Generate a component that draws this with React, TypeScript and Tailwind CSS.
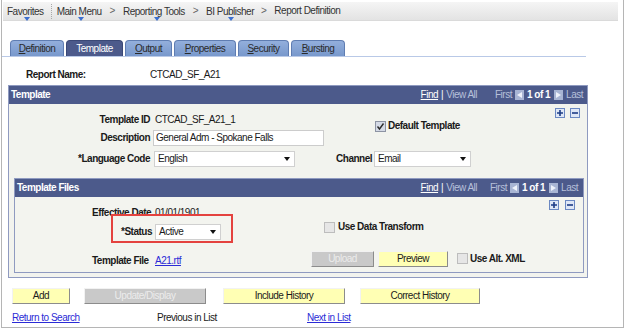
import React from 'react';

function Caret({ left }: { left: string }) {
  return (
    <svg className={`absolute top-[15px] ${left}`} width="6" height="4" viewBox="0 0 6 4">
      <path d="M0 0 L6 0 L3 4 Z" fill="#3b6fcf" />
    </svg>
  );
}

function Tab({ label, width, active }: { label: string; width: string; active?: boolean }) {
  return (
    <div
      className={`h-[16px] ${width} rounded-t-[4px] border border-b-0 flex items-center justify-center ${
        active
          ? 'bg-[#4c5a8b] border-[#3a4876] text-white'
          : 'bg-gradient-to-b from-[#93afdc] to-[#7898cc] border-[#5f7db2] text-[#2b2b2b]'
      }`}
    >
      {active ? (
        label
      ) : (
        <span>
          <span className="underline">{label[0]}</span>
          {label.slice(1)}
        </span>
      )}
    </div>
  );
}

function Check({ checked, disabled }: { checked?: boolean; disabled?: boolean }) {
  return (
    <span
      className={`w-[11px] h-[11px] border flex items-center justify-center ${
        disabled ? 'bg-[#e6e6e6] border-[#bdbdbd]' : 'bg-[#d5dae6] border-[#8d93a3]'
      }`}
    >
      {checked && (
        <svg width="9" height="9" viewBox="0 0 9 9">
          <path d="M1.5 4.5 L3.5 7 L7.5 1.5" stroke="#2c2c2c" strokeWidth="1.4" fill="none" />
        </svg>
      )}
    </span>
  );
}

function Select({ value, width }: { value: string; width: string }) {
  return (
    <div className={`h-[16px] ${width} bg-white border border-[#d0d0d0] flex items-center justify-between pl-[3px] pr-[4px]`}>
      <span>{value}</span>
      <svg width="6" height="4" viewBox="0 0 6 4">
        <path d="M0 0 L6 0 L3 4 Z" fill="#111" />
      </svg>
    </div>
  );
}

function PlusMinus({ gap }: { gap: string }) {
  return (
    <div className={`flex ${gap}`}>
      <span className="w-[10px] h-[10px] border border-[#6b88c2] bg-[#dfe7f6] flex items-center justify-center">
        <svg width="8" height="8" viewBox="0 0 8 8">
          <path d="M4 1 V7 M1 4 H7" stroke="#1d3c86" strokeWidth="1.6" />
        </svg>
      </span>
      <span className="w-[10px] h-[10px] border border-[#6b88c2] bg-[#dfe7f6] flex items-center justify-center">
        <svg width="8" height="8" viewBox="0 0 8 8">
          <path d="M1 4 H7" stroke="#1d3c86" strokeWidth="1.6" />
        </svg>
      </span>
    </div>
  );
}

function NavArrow({ dir }: { dir: 'left' | 'right' }) {
  return (
    <span className="w-[9px] h-[10px] bg-[#a8b5d4] flex items-center justify-center">
      <svg width="5" height="6" viewBox="0 0 5 6">
        {dir === 'left' ? <path d="M5 0 L5 6 L0 3 Z" fill="#eef2fb" /> : <path d="M0 0 L0 6 L5 3 Z" fill="#eef2fb" />}
      </svg>
    </span>
  );
}

function GridHeader({ title, pr, firstGap }: { title: string; pr: string; firstGap: string }) {
  return (
    <div className={`h-[18px] bg-[#4c5a8b] flex items-center pl-[2px] ${pr}`}>
      <span className="text-white font-bold">{title}</span>
      <div className="ml-auto flex items-center">
        <span className="text-white underline">Find</span>
        <span className="text-white ml-[3px]">|</span>
        <span className="text-[#b7c0da] ml-[3px]">View All</span>
        <span className={`text-[#b7c0da] ${firstGap}`}>First</span>
        <span className="ml-[3px]">
          <NavArrow dir="left" />
        </span>
        <span className="text-white font-bold ml-[3px]">1 of 1</span>
        <span className="ml-[4px]">
          <NavArrow dir="right" />
        </span>
        <span className="text-[#b7c0da] ml-[3px]">Last</span>
      </div>
    </div>
  );
}

function Btn({ label, width, disabled }: { label: string; width: string; disabled?: boolean }) {
  return (
    <div
      className={`h-[16px] ${width} flex items-center justify-center border border-t-[#f2f2f2] border-l-[#f2f2f2] border-r-[#8c8c8c] border-b-[#8c8c8c] ${
        disabled ? 'bg-[#c9c9c9] text-[#ececec]' : 'bg-[#ffffb4] text-[#1c1c1c]'
      }`}
    >
      {label}
    </div>
  );
}

export default function App() {
  return (
    <div className="w-[625px] h-[330px] bg-white overflow-hidden font-['Liberation_Sans',Arial,sans-serif] text-[10px] tracking-[-0.5px] leading-none text-[#1a1a1a]">
      <div className="ml-px w-[623px] h-[328px] border-x border-b border-[#b5b5b5] flex flex-col">
        {/* breadcrumbs */}
        <div className="mt-[2px] ml-px w-[615px] h-[19px] bg-gradient-to-b from-[#f5f5f5] to-[#e3e3e3] border-b border-[#dadada] flex items-center pl-[4px] text-[#333]">
          <span className="relative leading-[19px] h-[19px]">
            Favorites
            <Caret left="left-[17px]" />
          </span>
          <span className="ml-[7px] h-[15px] border-l border-dotted border-[#a8a8a8]" />
          <span className="relative ml-[5px] leading-[19px] h-[19px]">
            Main Menu
            <Caret left="left-[21px]" />
          </span>
          <span className="ml-[8px] text-[#666]">&gt;</span>
          <span className="relative ml-[8px] leading-[19px] h-[19px]">
            Reporting Tools
            <Caret left="left-[31px]" />
          </span>
          <span className="ml-[8px] text-[#666]">&gt;</span>
          <span className="relative ml-[8px] leading-[19px] h-[19px]">
            BI Publisher
            <Caret left="left-[22px]" />
          </span>
          <span className="ml-[7px] text-[#666]">&gt;</span>
          <span className="ml-[8px]">Report Definition</span>
        </div>

        {/* tabs */}
        <div className="mt-[19px] pl-[8px] flex items-end gap-[2px]">
          <Tab label="Definition" width="w-[54px]" />
          <Tab label="Template" width="w-[57px]" active />
          <Tab label="Output" width="w-[47px]" />
          <Tab label="Properties" width="w-[62px]" />
          <Tab label="Security" width="w-[51px]" />
          <Tab label="Bursting" width="w-[54px]" />
        </div>
        <div className="h-px w-[584px] bg-[#b9c9e7]" />

        {/* report name */}
        <div className="mt-[11px] h-[13px] pl-[24px] flex items-center">
          <span className="w-[124px] font-bold">Report Name:</span>
          <span>CTCAD_SF_A21</span>
        </div>

        {/* template grid */}
        <div className="mt-[4px] ml-[6px] w-[580px] h-[193px] border border-[#8f9ac0] flex flex-col">
          <GridHeader title="Template" pr="pr-[4px]" firstGap="ml-[18px]" />
          <div className="flex-1 bg-[#f2f3ee] flex flex-col">
            <div className="flex">
              <div className="pt-[7px] flex flex-col">
                <div className="h-[18px] flex items-center">
                  <span className="w-[141px] text-right font-bold">Template ID</span>
                  <span className="ml-[5px]">CTCAD_SF_A21_1</span>
                </div>
                <div className="h-[18px] flex items-center">
                  <span className="w-[141px] text-right font-bold">Description</span>
                  <div className="ml-[3px] w-[171px] h-[16px] bg-white border border-[#cccccc] flex items-center pl-[2px]">
                    General Adm - Spokane Falls
                  </div>
                </div>
                <div className="mt-[3px] h-[18px] flex items-center">
                  <span className="w-[141px] text-right font-bold">*Language Code</span>
                  <div className="ml-[4px]">
                    <Select value="English" width="w-[141px]" />
                  </div>
                </div>
              </div>
              <div className="pt-[14px] flex flex-col">
                <div className="h-[16px] ml-[51px] flex items-center">
                  <Check checked />
                  <span className="ml-[2px] font-bold">Default Template</span>
                </div>
                <div className="mt-[16px] h-[18px] flex items-center">
                  <span className="w-[48px] text-right font-bold">Channel</span>
                  <div className="ml-[2px]">
                    <Select value="Email" width="w-[97px]" />
                  </div>
                </div>
              </div>
              <div className="ml-auto pt-[4px] pr-[7px]">
                <PlusMinus gap="gap-[5px]" />
              </div>
            </div>

            {/* template files grid */}
            <div className="relative mt-[10px] ml-[5px] w-[570px] h-[95px] border border-[#8f9ac0] flex flex-col">
              <GridHeader title="Template Files" pr="pr-[5px]" firstGap="ml-[13px]" />
              <div className="flex-1 bg-[#f3f4ef] flex">
                <div className="pt-[8px] pl-[77px] flex flex-col">
                  <div className="h-[16px] flex items-center">
                    <span className="w-[60px] font-bold">Effective Date</span>
                    <span className="ml-[3px]">01/01/1901</span>
                  </div>
                  <div className="mt-[2px] h-[17px] flex items-center">
                    <span className="w-[60px] text-right font-bold">*Status</span>
                    <div className="ml-[3px]">
                      <Select value="Active" width="w-[66px]" />
                    </div>
                  </div>
                  <div className="mt-[13px] h-[16px] flex items-center">
                    <span className="w-[60px] font-bold">Template File</span>
                    <span className="ml-[3px] text-[#2b2bd6] underline">A21.rtf</span>
                  </div>
                </div>
                <div className="ml-[90px] pt-[23px] flex flex-col">
                  <div className="h-[14px] pl-[13px] flex items-center">
                    <Check disabled />
                    <span className="ml-[3px] font-bold">Use Data Transform</span>
                  </div>
                  <div className="mt-[16px] h-[17px] flex items-center">
                    <Btn label="Upload" width="w-[63px]" disabled />
                    <div className="ml-[4px]">
                      <Btn label="Preview" width="w-[70px]" />
                    </div>
                    <span className="ml-[9px]">
                      <Check disabled />
                    </span>
                    <span className="ml-[2px] font-bold">Use Alt. XML</span>
                  </div>
                </div>
                <div className="ml-auto pt-[3px] pr-[8px]">
                  <PlusMinus gap="gap-[6px]" />
                </div>
              </div>
              {/* highlight annotation */}
              <div className="absolute left-[96px] top-[35px] w-[122px] h-[29px] border-2 border-[#e4423f]" />
            </div>
          </div>
        </div>

        {/* toolbar buttons */}
        <div className="mt-[10px] pl-[10px] flex items-center">
          <Btn label="Add" width="w-[58px]" />
          <div className="ml-[14px]">
            <Btn label="Update/Display" width="w-[122px]" disabled />
          </div>
          <div className="ml-[17px]">
            <Btn label="Include History" width="w-[122px]" />
          </div>
          <div className="ml-[15px]">
            <Btn label="Correct History" width="w-[120px]" />
          </div>
        </div>
        <div className="mt-[7px] h-[13px] pl-[10px] flex items-center">
          <span className="w-[145px] text-[#2b2bd6] underline">Return to Search</span>
          <span className="w-[150px]">Previous in List</span>
          <span className="text-[#2b2bd6] underline">Next in List</span>
        </div>
      </div>
    </div>
  );
}
